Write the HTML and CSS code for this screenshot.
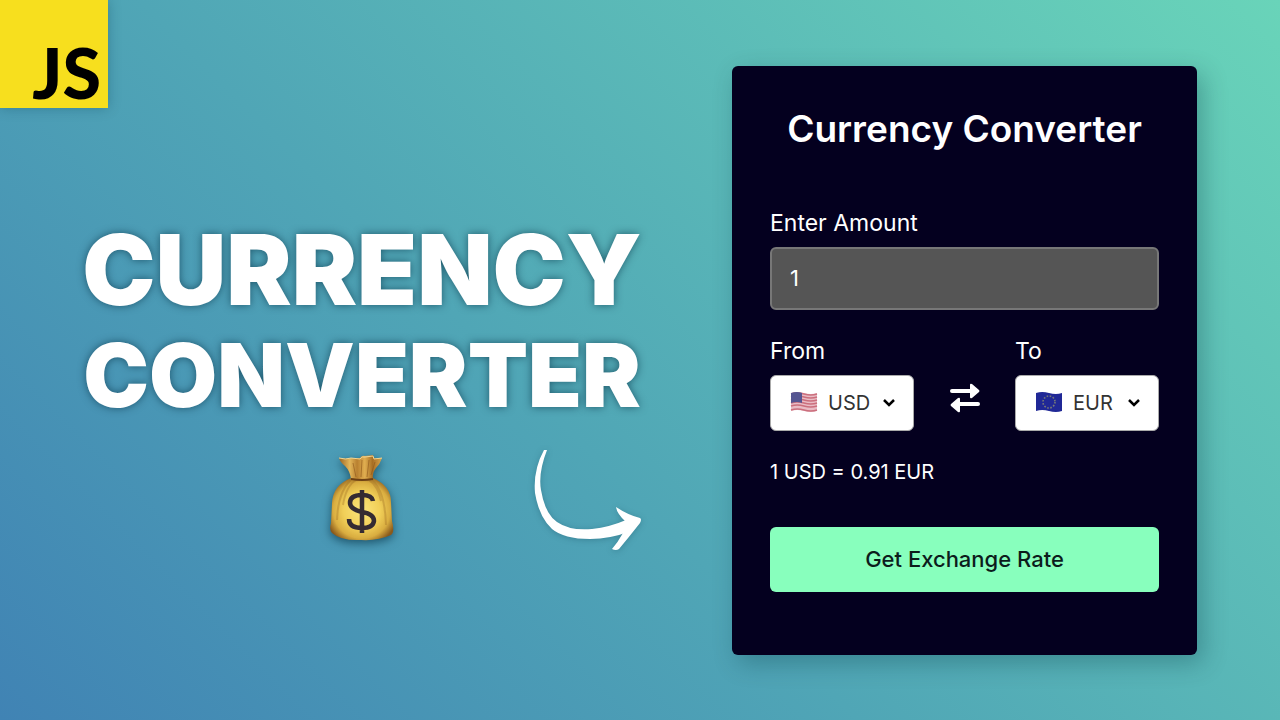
FILE: index.html
```html
<!DOCTYPE html>
<html lang="en">
<head>
<meta charset="utf-8">
<meta name="viewport" content="width=device-width, initial-scale=1">
<title>Currency Converter</title>
<link rel="stylesheet" href="styles.css">
</head>
<body class="page">
<div class="logo">JS</div>
<main class="stage">
  <section class="hero">
    <div class="hero-inner">
      <h1 class="headline"><span class="line line-large">CURRENCY</span><span class="line line-small">CONVERTER</span></h1>
      <div class="art">
        <svg class="bag" viewBox="0 0 66 88" width="66" height="88" aria-hidden="true">
          <defs>
            <radialGradient id="body" cx="50%" cy="52%" r="58%">
              <stop offset="0" stop-color="#fbe47c"/><stop offset=".5" stop-color="#f1cf58"/><stop offset=".78" stop-color="#d9ad40"/><stop offset="1" stop-color="#8a5a1c"/>
            </radialGradient>
            <linearGradient id="neck" x1="0" x2="1" y1="0" y2="0">
              <stop offset="0" stop-color="#9a6422"/><stop offset=".25" stop-color="#e2b65a"/><stop offset=".42" stop-color="#b98030"/><stop offset=".6" stop-color="#e0ae50"/><stop offset=".78" stop-color="#a86f24"/><stop offset="1" stop-color="#d9a64c"/>
            </linearGradient>
          </defs>
          <path d="M10 3Q17 4 22 3L31 3Q33 0 36 1L44 0L45 3L53 3Q51 9 47 13Q43 18 44 24L22 24Q21 16 16 11Q11 7 10 3Z" fill="url(#neck)"/>
          <path d="M10 3Q17 5 22 3L31 4Q33 1 36 2L44 1L45 4L53 3" fill="none" stroke="#eed596" stroke-width="1"/>
          <path d="M24 8L27 22M33 5L32 22M40 5L38 22M46 7L42 20" stroke="#8d571b" stroke-width="1" opacity=".6"/>
          <path d="M22 23Q33 25 44 23Q62 31 62 47L63 66Q66 77 62 80Q49 86 32 85Q12 86 3 78Q0 75 2 68L3 48Q4 30 22 23Z" fill="url(#body)"/>
          <path d="M22 25Q9 37 8 65M27 25Q17 31 14 50M43 25Q56 36 57 70M40 25Q49 31 52 46" fill="none" stroke="#94651f" stroke-width="2" opacity=".3"/>
          <path d="M22 24Q33 26 44 24" fill="none" stroke="#6d4015" stroke-width="2"/>
          <path d="M44 46Q43 40 33 40Q21 40 21 48Q21 54 33 57Q45 59 45 66Q44 73 33 73Q20 73 20 64M33 35V78" fill="none" stroke="#352b32" stroke-width="4.5"/>
        </svg>
        <svg class="arrow" viewBox="0 0 108 101" width="108" height="101" aria-hidden="true">
          <path d="M10 0H13Q4 23 7 40Q11 64 23 72Q36 81 58 79Q76 77 92 70L97 81Q76 89 56 89Q30 89 18 79Q5 67 1 43Q-1 20 10 0Z" fill="#fff"/>
          <path d="M82 57Q94 65 106 68Q108 69 106 73Q95 87 85 99Q82 101 78 99Q84 92 89 83L85 76L92 72Q83 64 82 57Z" fill="#fff"/>
        </svg>
      </div>
    </div>
  </section>
  <form class="card">
    <h2 class="title">Currency Converter</h2>
    <label class="label" for="amount">Enter Amount</label>
    <input class="amount" id="amount" type="text" inputmode="decimal" value="1">
    <div class="pair">
      <div class="field">
        <label class="label" for="from">From</label>
        <div class="picker">
          <select class="select" id="from"><option>USD</option><option>GBP</option></select>
          <svg class="flag" viewBox="0 0 28 22" width="28" height="22" aria-hidden="true">
            <path d="M1 2Q7 0 14 2T27 2V20Q21 22 14 20T1 20Z" fill="#e9bcc5"/>
            <path d="M1 3Q7 1 14 3T27 3M1 6Q7 4 14 6T27 6M1 9Q7 7 14 9T27 9M1 12Q7 10 14 12T27 12M1 15Q7 13 14 15T27 15M1 19Q7 17 14 19T27 19" fill="none" stroke="#cb6f7d" stroke-width="1.6"/>
            <path d="M1 2Q7 0 12 2V12Q7 10 1 12Z" fill="#555591"/>
          </svg>
          <svg class="chevron" viewBox="0 0 12 8" width="12" height="8" aria-hidden="true"><path d="M1 1L6 6L11 1" fill="none" stroke="#000" stroke-width="2.5"/></svg>
        </div>
      </div>
      <button class="swap" type="button" aria-label="Swap currencies">
        <svg viewBox="0 0 30 30" width="30" height="30" aria-hidden="true">
          <path d="M2 8H21M28 21H9" stroke="#fff" stroke-width="4" stroke-linecap="round"/>
          <path d="M20 2Q20 0 22 1L29 7Q30 8 29 9L22 15Q20 16 20 14ZM10 16Q10 14 8 15L1 21Q0 22 1 23L8 29Q10 30 10 28Z" fill="#fff"/>
        </svg>
      </button>
      <div class="field">
        <label class="label" for="to">To</label>
        <div class="picker">
          <select class="select" id="to"><option>EUR</option><option>GBP</option></select>
          <svg class="flag" viewBox="0 0 28 22" width="28" height="22" aria-hidden="true">
            <path d="M1 2Q7 0 14 2T27 2V20Q21 22 14 20T1 20Z" fill="#202896"/>
            <circle cx="14" cy="11" r="6" fill="none" stroke="#777a78" stroke-width="1.6" stroke-dasharray="1.6 1.54"/>
          </svg>
          <svg class="chevron" viewBox="0 0 12 8" width="12" height="8" aria-hidden="true"><path d="M1 1L6 6L11 1" fill="none" stroke="#000" stroke-width="2.5"/></svg>
        </div>
      </div>
    </div>
    <p class="result">1 USD = 0.91 EUR</p>
    <button class="submit" type="button">Get Exchange Rate</button>
  </form>
</main>
</body>
</html>
```
FILE: styles.css
```css
* { box-sizing: border-box; }
.page {
  margin: 0;
  min-height: 100vh;
  font-family: Inter, "Liberation Sans", sans-serif;
  color: #fff;
  background: linear-gradient(45deg, #4083b4 0%, #50a6b6 43%, #69d4b9 100%);
}
.logo {
  position: absolute;
  top: 0;
  left: 0;
  display: flex;
  align-items: flex-end;
  justify-content: flex-end;
  width: 108px;
  height: 108px;
  padding: 0 7px 2px 0;
  background: #f7df1e;
  color: #000;
  font: 900 70px/68px Lato, sans-serif;
  box-shadow: 0 0 12px rgba(0, 50, 70, .3);
}
.stage {
  display: grid;
  grid-template-columns: minmax(0, 1fr) 465px;
  align-items: center;
  gap: 8px;
  min-height: 100vh;
  padding: 0 83px 0 0;
}
.hero {
  display: flex;
  justify-content: center;
  padding: 44px 0 0;
}
.headline {
  display: flex;
  flex-direction: column;
  align-items: center;
  margin: 0;
  font-weight: 900;
  text-shadow: 0 0 9px rgba(0, 40, 60, .6);
}
.line-large { font-size: 98px; line-height: 114px; }
.line-small { font-size: 88px; line-height: 96px; }
.art {
  display: grid;
  grid-template-columns: 1fr auto 1fr;
  align-items: start;
  padding: 27px 0 0;
}
.bag {
  grid-column: 2;
  margin: 5px 0 0;
  filter: drop-shadow(0 3px 5px rgba(0, 40, 60, .6));
}
.arrow {
  grid-column: 3;
  justify-self: end;
  filter: drop-shadow(0 1px 3px rgba(0, 40, 60, .25));
}
.card {
  display: flex;
  flex-direction: column;
  padding: 38px 38px 63px;
  border-radius: 6px;
  background: #04001f;
  box-shadow: 6px 8px 24px rgba(0, 50, 60, .3);
}
.title {
  margin: 0 0 53px;
  font-size: 37px;
  line-height: 50px;
  font-weight: 600;
  text-align: center;
}
.label {
  margin: 0 0 8px;
  font-size: 23px;
  line-height: 32px;
}
.amount {
  width: 100%;
  height: 63px;
  padding: 0 18px;
  border: 2px solid #777;
  border-radius: 6px;
  background: #555;
  color: #fff;
  font: 22px Inter, sans-serif;
}
.pair {
  display: flex;
  align-items: flex-end;
  justify-content: space-between;
  margin: 25px 0;
}
.field {
  display: flex;
  flex-direction: column;
  width: 144px;
}
.picker { position: relative; }
.select {
  display: block;
  appearance: none;
  width: 100%;
  height: 56px;
  padding: 0 30px 0 57px;
  border: 1px solid #aaa;
  border-radius: 6px;
  background: #fff;
  color: #333;
  font: 20px Inter, sans-serif;
}
.flag, .chevron {
  position: absolute;
  pointer-events: none;
}
.flag { left: 20px; top: 16px; }
.chevron { right: 19px; top: 24px; }
.swap {
  display: flex;
  align-items: center;
  height: 66px;
  padding: 0;
  border: 0;
  background: none;
}
.result {
  margin: 0 0 39px;
  font-size: 20px;
  line-height: 32px;
}
.submit {
  height: 65px;
  border: 0;
  border-radius: 6px;
  background: #88ffbd;
  color: #0c1c1c;
  font: 500 22px Inter, sans-serif;
}
```
